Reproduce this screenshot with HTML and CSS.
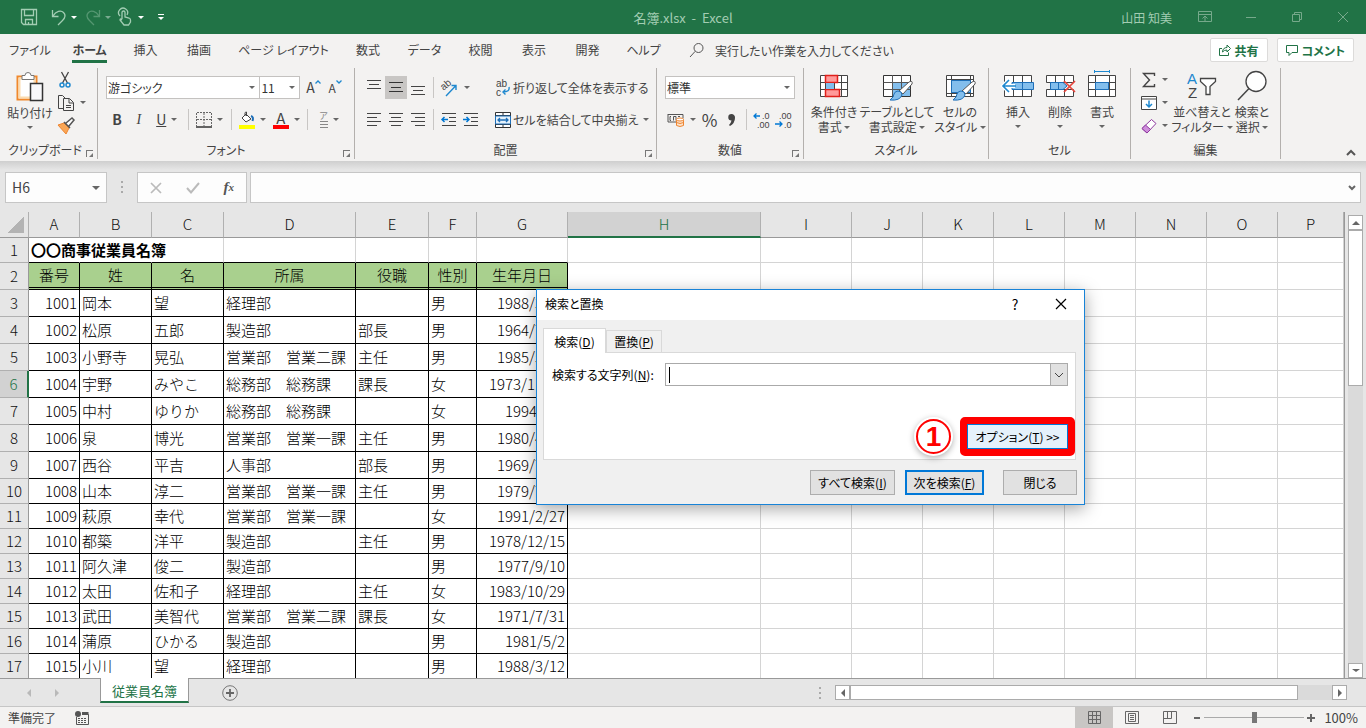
FILE: index.html
```html
<!DOCTYPE html>
<html lang="ja">
<head>
  <meta charset="UTF-8">
  <title>名簿.xlsx - Excel</title>
  <link rel="stylesheet" href="styles.css">
</head>
<body>
  <header class="titlebar">
    <div class="quick">
      <button aria-label="上書き保存"><svg width="18" height="18" viewBox="0 0 18 18"><path d="M1.500 1.500h15v15h-13l-2-2zM4.500 1.500v6h9v-6M5.500 16.500v-5h7v5M8.500 16v-2"/></svg></button>
      <button class="split" aria-label="元に戻す"><svg width="18" height="18" viewBox="0 0 18 18"><path d="M2.500 2v6.500h6M3 8c3-5 8-6 10.500-3.500 3 3 1 6-1 8L8 17"/></svg><i class="caret"></i></button>
      <button class="split dim" aria-label="やり直し"><svg width="18" height="18" viewBox="0 0 18 18"><path d="M15.500 2v6.500h-6M15 8c-3-5-8-6-10.500-3.500-3 3-1 6 1 8L10 17"/></svg><i class="caret"></i></button>
      <button class="split touch" aria-label="タッチ/マウス モード"><svg width="14" height="18" viewBox="2 0 14 18"><path d="M6 11V4.500a1.500 1.500 0 0 1 3 0V9l4 1q1.500.5 1.500 2v2l-2 3H8l-4-5q0-2 2 0M4 8a4.500 4.500 0 1 1 7-1"/></svg><i class="caret"></i></button>
      <button class="customize" aria-label="クイック アクセス ツール バーのユーザー設定"><i class="bar"></i><i class="caret"></i></button>
    </div>
    <div class="doc-title">名簿.xlsx&nbsp; -&nbsp; Excel</div>
    <div class="window-buttons">
      <span class="user">山田 知美</span>
      <button aria-label="リボンの表示オプション"><svg width="14" height="12" viewBox="0 0 14 12"><path d="M.5.5h13v10H.5zM.5 3.500h13M7 10V5M4.500 7.500L7 5l2.500 2.500"/></svg></button>
      <button aria-label="最小化"><svg width="12" height="12" viewBox="0 0 12 12"><path d="M1 6.500h10"/></svg></button>
      <button aria-label="元に戻す(縮小)"><svg width="12" height="12" viewBox="0 0 12 12"><path d="M1.500 3.500h7v7h-7zM3.500 3V1.500h7v7H9"/></svg></button>
      <button aria-label="閉じる"><svg width="12" height="12" viewBox="0 0 12 12"><path d="M1 1l10 10M11 1L1 11"/></svg></button>
    </div>
  </header>

  <nav class="tabs">
    <div class="tab-list">
      <a href="#">ファイル</a>
      <a href="#" class="active"><span>ホーム</span></a>
      <a href="#">挿入</a>
      <a href="#">描画</a>
      <a href="#">ページ レイアウト</a>
      <a href="#">数式</a>
      <a href="#">データ</a>
      <a href="#">校閲</a>
      <a href="#">表示</a>
      <a href="#">開発</a>
      <a href="#">ヘルプ</a>
    </div>
    <button class="tell-me"><svg width="16" height="16" viewBox="0 0 16 16"><circle cx="9.500" cy="6" r="4.500"/><path d="M6.200 9.300L1 15"/></svg>実行したい作業を入力してください</button>
    <div class="tab-actions">
      <button><svg width="12" height="12" viewBox="0 0 12 12"><path d="M3 4.500H.5v7h9v-3M3.500 8c0-3 2-4.500 4.500-4.500V1L11.500 4.500 8 8V6Q5 6 3.500 8z"/></svg>共有</button>
      <button><svg width="12" height="12" viewBox="0 0 12 12"><path d="M.5 1.500h11v7H6l-3 3v-3H.5z"/></svg>コメント</button>
    </div>
  </nav>

  <section class="ribbon">
    <div class="group clipboard">
      <div class="tools">
        <button class="big">
          <svg width="28" height="31" viewBox="0 0 28 31"><path d="M1.500 5.500h19v23h-19z" fill="#fff" stroke="#f0882c" stroke-width="2"/><path d="M3.500 7.500h15v19h-15z" stroke="#fbdcb0" stroke-width="2"/><path d="M6 8.500v-4h3q0-3 3-3t3 3h3v4z" fill="#fff" stroke="#777"/><path d="M14.500 12.500h12v17h-12z" fill="#f8f8fa" stroke="#333" stroke-width="1.500"/></svg>
          <span>貼り付け</span><i class="caret"></i>
        </button>
        <div class="stack">
          <button aria-label="切り取り"><svg width="16" height="18" viewBox="0 0 16 18"><path d="M4.500 1l6 11M11.500 1l-6 11" stroke="#444" stroke-width="1.300"/><circle cx="5" cy="14" r="2" stroke="#1e88cf" stroke-width="1.500"/><circle cx="11" cy="14" r="2" stroke="#1e88cf" stroke-width="1.500"/></svg></button>
          <button class="split" aria-label="コピー"><svg width="18" height="18" viewBox="0 0 18 18"><path d="M6 14.500H1.500v-13h4l3 3M6.500 4.500h6l4 4v8h-10zM12 5v4h4M9 11.500h5M9 13.500h5" stroke="#444"/></svg><i class="caret"></i></button>
          <button aria-label="書式のコピー/貼り付け"><svg width="18" height="18" viewBox="0 0 18 18"><path d="M1 8l6-2 5 5-3 6z" fill="#f9a656" stroke="#ee8531"/><path d="M7 5l6 6M9 6l6-5 2 2-5 6" fill="#fff" stroke="#555" stroke-width="1.500"/></svg></button>
        </div>
      </div>
      <div class="group-name">クリップボード</div><i class="launcher"></i>
    </div>

    <div class="group font">
      <div class="tools rows">
        <div class="row">
          <select class="font-name" aria-label="フォント"><option>游ゴシック</option></select>
          <select class="font-size" aria-label="フォント サイズ"><option>11</option></select>
          <button class="letter grow" aria-label="フォント サイズの拡大">A<svg width="6" height="4" viewBox="0 0 6 4"><path d="M.5 3.500L3 1l2.500 2.500" stroke="#1e88cf" stroke-width="1.300"/></svg></button>
          <button class="letter shrink" aria-label="フォント サイズの縮小">A<svg width="6" height="4" viewBox="0 0 6 4"><path d="M.5.5L3 3 5.500.5" stroke="#1e88cf" stroke-width="1.300"/></svg></button>
        </div>
        <div class="row">
          <button class="tool"><b>B</b></button>
          <button class="tool italic">I</button>
          <button class="split"><u>U</u><i class="caret"></i></button>
          <i class="sep"></i>
          <button class="split" aria-label="罫線"><svg width="16" height="16" viewBox="0 0 16 16"><path d="M1 .5h14M1 7.500h14M.5 1v13M8 1v13M15.500 1v13" stroke="#666" stroke-dasharray="2 1"/><path d="M0 15h16" stroke="#333" stroke-width="1.500"/></svg><i class="caret"></i></button>
          <i class="sep"></i>
          <button class="split" aria-label="塗りつぶしの色"><svg width="16" height="18" viewBox="0 0 16 18"><path d="M7 3l5 5-5 3-4-4zM6 5V2q0-1 1.500-1v4" fill="#fff" stroke="#444"/><path d="M12 5q3 1 1.500 5" stroke="#1e6fb8" stroke-width="2"/><path d="M0 14h16v4H0z" fill="#ff0"/></svg><i class="caret"></i></button>
          <button class="split font-color"><span>A</span><i class="caret"></i></button>
          <i class="sep"></i>
          <button class="split ruby"><span>ア<svg width="8" height="7" viewBox="0 0 8 7"><path d="M0 .5h8M0 3.500h8M0 6.500h8" stroke="#888"/></svg></span><i class="caret"></i></button>
        </div>
      </div>
      <div class="group-name">フォント</div><i class="launcher"></i>
    </div>

    <div class="group align">
      <div class="tools">
        <div class="rows">
          <div class="row">
            <button class="tool" aria-label="上揃え"><svg width="16" height="16" viewBox="0 0 16 16"><path d="M1 .5h14M3 4.500h10M1 8.500h14" stroke="#444"/></svg></button>
            <button class="tool on" aria-label="上下中央揃え"><svg width="16" height="16" viewBox="0 0 16 16"><path d="M1 2.500h14M3 7.500h10M1 11.500h14" stroke="#333"/></svg></button>
            <button class="tool" aria-label="下揃え"><svg width="16" height="16" viewBox="0 0 16 16"><path d="M1 6.500h14M3 10.500h10M1 14.500h14" stroke="#444"/></svg></button>
            <i class="sep"></i>
            <button class="split angle" aria-label="方向"><svg width="18" height="18" viewBox="0 0 18 18"><text x="0" y="9" transform="rotate(-40 5 7)">ab</text><path d="M5 17L15 6.500M10.500 6.500H15V11" stroke="#1e88cf" stroke-width="1.400"/></svg><i class="caret"></i></button>
          </div>
          <div class="row">
            <button class="tool" aria-label="左揃え"><svg width="16" height="14" viewBox="0 0 16 14"><path d="M1 .5h14M1 4.500h10M1 8.500h14M1 12.500h10" stroke="#444"/></svg></button>
            <button class="tool" aria-label="中央揃え"><svg width="16" height="14" viewBox="0 0 16 14"><path d="M1 .5h14M3 4.500h10M1 8.500h14M3 12.500h10" stroke="#444"/></svg></button>
            <button class="tool" aria-label="右揃え"><svg width="16" height="14" viewBox="0 0 16 14"><path d="M1 .5h14M5 4.500h10M1 8.500h14M5 12.500h10" stroke="#444"/></svg></button>
            <i class="sep"></i>
            <button class="tool" aria-label="インデントを減らす"><svg width="16" height="14" viewBox="0 0 16 14"><path d="M1 .5h14M8 4.500h7M8 8.500h7M1 12.500h14" stroke="#444"/><path d="M1 6.500h6M3.500 4L1 6.500 3.500 9" stroke="#0078d4" stroke-width="1.500"/></svg></button>
            <button class="tool" aria-label="インデントを増やす"><svg width="16" height="14" viewBox="0 0 16 14"><path d="M1 .5h14M8 4.500h7M8 8.500h7M1 12.500h14" stroke="#444"/><path d="M0 6.500h6M3.500 4L6 6.500 3.500 9" stroke="#0078d4" stroke-width="1.500"/></svg></button>
          </div>
        </div>
        <i class="tall-sep"></i>
        <div class="rows">
          <div class="row">
            <button class="wide"><svg width="16" height="18" viewBox="0 0 16 18"><text x="1" y="8">ab</text><text x="1" y="17">c</text><path d="M14 8q1 5-6 5M10.500 10.500L8 13l2.500 2.500" stroke="#1e88cf" stroke-width="1.400"/></svg>折り返して全体を表示する</button>
          </div>
          <div class="row">
            <button class="wide"><svg width="16" height="16" viewBox="0 0 16 16"><path d="M.5.5h15v15H.5zM8 1v3M8 12v3M1 3.500h14M1 12.500h14" stroke="#333" fill="#fff"/><path d="M.5 4h15v8H.5z" fill="#e6f2fb" stroke="#1e6fb8"/><path d="M3 8h10M5 6L3 8l2 2M11 6l2 2-2 2" stroke="#1e6fb8" stroke-width="1.300"/></svg>セルを結合して中央揃え<i class="caret"></i></button>
          </div>
        </div>
      </div>
      <div class="group-name">配置</div><i class="launcher"></i>
    </div>

    <div class="group number">
      <div class="tools rows">
        <div class="row"><select class="format" aria-label="数値の書式"><option>標準</option></select></div>
        <div class="row">
          <button class="split" aria-label="通貨表示形式"><svg width="18" height="16" viewBox="0 0 18 16"><path d="M1 2.500h15v4M1 2v8h8M4 4.500H3v4h1M6.500 8.500v-4H9v4M11 4.500h2" stroke="#555"/><path d="M9.500 7.500v6q3.500 2 7 0v-6" fill="#fde3cb" stroke="#ee8531"/><ellipse cx="13" cy="7.500" rx="3.500" ry="1.500" fill="#fff" stroke="#ee8531"/><path d="M9.500 10.500q3.500 2 7 0" stroke="#ee8531"/></svg><i class="caret"></i></button>
          <button class="tool percent">%</button>
          <button class="tool" aria-label="桁区切りスタイル"><svg width="9" height="14" viewBox="0 0 9 14"><path d="M4.500 1a3.500 3.500 0 0 1 3.500 4q0 5-5 8l-1-1q2-2 2.500-4.500a3.200 3.200 0 0 1 0-6.500z" fill="#444"/></svg></button>
          <i class="sep"></i>
          <button class="tool digits" aria-label="小数点以下の表示桁数を増やす"><svg width="18" height="16" viewBox="0 0 18 16"><text x="9" y="7">.0</text><text x="4" y="16">.00</text><path d="M1 4h6M3.500 1.500L1 4l2.500 2.500" stroke="#0078d4" stroke-width="1.300"/></svg></button>
          <button class="tool digits" aria-label="小数点以下の表示桁数を減らす"><svg width="18" height="16" viewBox="0 0 18 16"><text x="4" y="7">.00</text><text x="9" y="16">.0</text><path d="M0 12h7M4.500 9.500L7 12l-2.500 2.500" stroke="#0078d4" stroke-width="1.300"/></svg></button>
        </div>
      </div>
      <div class="group-name">数値</div><i class="launcher"></i>
    </div>

    <div class="group styles">
      <div class="tools">
        <button class="big">
          <svg width="30" height="30" viewBox="0 0 30 30"><path d="M1.500 4.500h27v21h-27zM1.500 11.500h27M1.500 18.500h27M22.500 4v21M15.500 4v21M6.500 4v21" fill="#fff" stroke="#444"/><path d="M6.500 4.500h12v7h-12zM6.500 18.500h14v7h-14z" fill="#ff9a9a" stroke="#e0201b" stroke-width="1.500"/><path d="M7 12h8v6H7z" fill="#83beec"/></svg>
          <span>条件付き<br>書式 <i class="caret"></i></span>
        </button>
        <button class="big as-table">
          <svg width="30" height="30" viewBox="0 0 30 30"><path d="M1.500 4.500h27v21h-27z" fill="#fff" stroke="#333"/><path d="M10 12h18v13H10z" fill="#83beec"/><path d="M1.500 11.500h27M1.500 18.500h27M10.500 4v21M19.500 4v21" stroke="#555"/><path d="M27 11q4-2 3 2l-9 10-4-3z" fill="#fff" stroke="#555"/><path d="M16 20q4 0 4 4-2 6-12 5 4-3 4-6 1-3 4-3z" fill="#83beec" stroke="#1e6fb8"/></svg>
          <span>テーブルとして<br>書式設定 <i class="caret"></i></span>
        </button>
        <button class="big">
          <svg width="30" height="30" viewBox="0 0 30 30"><path d="M1.500 4.500h27v21h-27zM1.500 8.500h27M1.500 22.500h27M6.500 4v21M25.500 4v21" fill="#fff" stroke="#444"/><path d="M6.500 9.500h19v12h-19z" fill="#83beec" stroke="#1e6fb8"/><path d="M27 11q4-2 3 2l-9 10-4-3z" fill="#fff" stroke="#555"/><path d="M16 20q4 0 4 4-2 6-12 5 4-3 4-6 1-3 4-3z" fill="#83beec" stroke="#1e6fb8"/></svg>
          <span>セルの<br>スタイル <i class="caret"></i></span>
        </button>
      </div>
      <div class="group-name">スタイル</div>
    </div>

    <div class="group cells">
      <div class="tools">
        <button class="big">
          <svg width="32" height="30" viewBox="0 0 32 30"><path d="M2.500 4.500h27v21h-27zM11.500 4v21M20.500 4v21" fill="#fff" stroke="#444"/><path d="M10 11.500h21.500v7H10zM20.500 12v6" fill="#83beec" stroke="#1e6fb8"/><path d="M7 9l-6 6 6 6M1 15h12" stroke="#fff" stroke-width="4"/><path d="M7 9l-6 6 6 6M1.500 15H14" stroke="#1e88cf" stroke-width="1.600"/></svg>
          <span>挿入</span><i class="caret"></i>
        </button>
        <button class="big">
          <svg width="32" height="30" viewBox="0 0 32 30"><path d="M2.500 4.500h27v7h-27zM2.500 18.500h27v7h-27zM11.500 4v7M20.500 4v7M11.500 18v7M20.500 18v7" fill="#fff" stroke="#444"/><path d="M6.500 11.500H19l4 3.500-4 3.500H6.500zM14.500 12v6" fill="#83beec" stroke="#1e6fb8"/><path d="M20 10l11 11M31 10L20 21" stroke="#e8453c" stroke-width="1.700"/></svg>
          <span>削除</span><i class="caret"></i>
        </button>
        <button class="big">
          <svg width="30" height="30" viewBox="0 0 30 30"><path d="M1.500 4.500h27v21h-27zM1.500 11.500h27M1.500 18.500h27M8.500 4v21M22.500 4v21" fill="#fff" stroke="#444"/><path d="M8.500 11.500h13v7h-13z" fill="#83beec" stroke="#1e6fb8"/><path d="M7.500.5h15M7.500-1v3M22.500-1v3" stroke="#1e88cf"/></svg>
          <span>書式</span><i class="caret"></i>
        </button>
      </div>
      <div class="group-name">セル</div>
    </div>

    <div class="group edit">
      <div class="tools">
        <div class="stack">
          <button class="split" aria-label="合計"><svg width="16" height="16" viewBox="0 0 16 16"><path d="M13.500 4V1.500H2.500L8.500 8l-6 6.500h11V12" stroke="#444" stroke-width="1.400"/></svg><i class="caret"></i></button>
          <button class="split" aria-label="フィル"><svg width="16" height="14" viewBox="0 0 16 14"><path d="M.5.5h15v13H.5zM.5 3h15" fill="#fff" stroke="#444"/><path d="M8 4.500V11M5 8l3 3 3-3" stroke="#1e88cf" stroke-width="1.500"/></svg><i class="caret"></i></button>
          <button class="split" aria-label="クリア"><svg width="16" height="16" viewBox="0 0 16 16"><path d="M10.500 1.500l4.500 4-9 9.500-5-4.500z" fill="#fff" stroke="#8f3aa0"/><path d="M4.500 7l5 4.500-3.500 3.500-5-4.500z" fill="#cf8fdc" stroke="#8f3aa0"/></svg><i class="caret"></i></button>
        </div>
        <button class="big">
          <svg class="sort" width="30" height="30" viewBox="0 0 30 30"><text class="a" x="0" y="13">A</text><text x="1" y="27">Z</text><path d="M13.500 7.500h15v3l-5.500 5v8h-4v-8l-5.500-5z" fill="#fff" stroke="#444" stroke-width="1.300"/></svg>
          <span>並べ替えと<br>フィルター <i class="caret"></i></span>
        </button>
        <button class="big">
          <svg width="30" height="30" viewBox="0 0 30 30"><circle cx="19" cy="10.500" r="10" fill="#fff" stroke="#444" stroke-width="1.300"/><path d="M12 17.500L1 29" stroke="#444" stroke-width="1.500"/></svg>
          <span>検索と<br>選択 <i class="caret"></i></span>
        </button>
      </div>
      <div class="group-name">編集</div>
    </div>
    <button class="collapse" aria-label="リボンを折りたたむ"><svg width="10" height="7" viewBox="0 0 10 7"><path d="M1 6l4-4 4 4" stroke="#555" stroke-width="2"/></svg></button>
  </section>

  <section class="formula-bar">
    <div class="name-box"><input type="text" value="H6" aria-label="名前ボックス"><i class="caret"></i></div>
    <i class="dots"></i>
    <div class="formula-buttons">
      <button aria-label="キャンセル"><svg width="12" height="12" viewBox="0 0 12 12"><path d="M1 1l10 10M11 1L1 11" stroke="#bbb" stroke-width="1.700"/></svg></button>
      <button aria-label="入力"><svg width="14" height="12" viewBox="0 0 14 12"><path d="M1 6l4 4.500L13 1" stroke="#bbb" stroke-width="2"/></svg></button>
      <button class="fx" aria-label="関数の挿入">f<small>x</small></button>
    </div>
    <div class="formula"><input type="text" aria-label="数式バー"><svg width="8" height="6" viewBox="0 0 8 6"><path d="M1 1l3 3 3-3" stroke="#666" stroke-width="2"/></svg></div>
  </section>

  <main class="sheet">
    <div class="grid-area">
      <table>
        <colgroup>
          <col class="w-head"><col class="w-a"><col class="w-b"><col class="w-b"><col class="w-d"><col class="w-e"><col class="w-f"><col class="w-g"><col class="w-h"><col class="w-g">
          <col class="w-j"><col class="w-j"><col class="w-j"><col class="w-j"><col class="w-j"><col class="w-j"><col>
        </colgroup>
        <thead><tr id="letters"><th class="corner"></th></tr></thead>
        <tbody id="cells"></tbody>
      </table>
    </div>
    <div class="vscroll">
      <button aria-label="上へスクロール"><i class="caret up"></i></button>
      <div class="track"><div class="thumb"></div></div>
      <button aria-label="下へスクロール"><i class="caret"></i></button>
    </div>
  </main>

  <footer class="sheet-tabs">
    <div class="sheet-nav"><i class="caret left"></i><i class="caret right"></i></div>
    <a href="#" class="sheet-tab">従業員名簿</a>
    <button class="add-sheet" aria-label="新しいシート"><svg width="16" height="16" viewBox="0 0 16 16"><circle cx="8" cy="8" r="7.300" stroke="#777"/><path d="M8 4v8M4 8h8" stroke="#666" stroke-width="1.800"/></svg></button>
    <i class="dots"></i>
    <div class="hscroll">
      <button aria-label="左へスクロール"><i class="caret left"></i></button>
      <div class="track"><div class="thumb"></div></div>
      <button aria-label="右へスクロール"><i class="caret right"></i></button>
    </div>
  </footer>

  <footer class="status">
    <span>準備完了</span>
    <svg class="macro" width="14" height="14" viewBox="0 0 14 14"><path d="M1.500 6v7.500h12v-10H7" stroke="#555"/><path d="M7 1h6.500v3H7z" fill="#555"/><circle cx="3" cy="3" r="3" fill="#555"/><path d="M3 7.500h9M3 9.500h9M3 11.500h9" stroke="#555" stroke-dasharray="2 1"/></svg>
    <div class="views">
      <button class="on" aria-label="標準"><svg width="13" height="13" viewBox="0 0 13 13"><path d="M.5.5h12v12H.5zM.5 4.500h12M.5 8.500h12M4.500.5v12M8.500.5v12"/></svg></button>
      <button aria-label="ページ レイアウト"><svg width="14" height="13" viewBox="0 0 14 13"><path d="M.5.5h13v12H.5zM3.500 2.500h7v8h-7zM5 4.500h4M5 6.500h4M5 8.500h4"/></svg></button>
      <button aria-label="改ページ プレビュー"><svg width="14" height="13" viewBox="0 0 14 13"><path d="M.5.5h13v12H.5zM4.500.5v7M8.500.5v7M.5 7.500h8"/></svg></button>
    </div>
    <div class="zoom">
      <button aria-label="縮小"><svg width="8" height="8" viewBox="0 0 8 8"><path d="M1 4h6" stroke-width="2"/></svg></button>
      <input type="range" min="0" max="100" value="50" aria-label="ズーム">
      <button aria-label="拡大"><svg width="8" height="8" viewBox="0 0 8 8"><path d="M0 4h8M4 0v8" stroke-width="2"/></svg></button>
      <span>100%</span>
    </div>
  </footer>

  <form class="dialog" role="dialog" aria-labelledby="dialogTitle">
    <div class="dialog-title">
      <span id="dialogTitle">検索と置換</span>
      <button type="button">?</button>
      <button type="button" aria-label="閉じる"><svg width="12" height="12" viewBox="0 0 12 12"><path d="M1 1l10 10M11 1L1 11" stroke="#000" stroke-width="1.200"/></svg></button>
    </div>
    <div class="dialog-tabs">
      <button type="button" class="active">検索(<u>D</u>)</button>
      <button type="button">置換(<u>P</u>)</button>
    </div>
    <div class="pane">
      <div class="field">
        <label for="findText">検索する文字列(<u>N</u>):</label>
        <div class="combo">
          <input type="text" id="findText">
          <button type="button" aria-label="履歴"><svg width="10" height="6" viewBox="0 0 10 6"><path d="M1 1l4 4 4-4" stroke="#444"/></svg></button>
        </div>
      </div>
      <div class="option-row">
        <span class="step">1</span>
        <button type="button" class="options">オプション(<u>T</u>) &gt;&gt;</button>
      </div>
    </div>
    <div class="dialog-buttons">
      <button type="button" class="find-all">すべて検索(<u>I</u>)</button>
      <button type="button" class="find-next">次を検索(<u>F</u>)</button>
      <button type="button" class="close">閉じる</button>
    </div>
  </form>

  <script>
    const letters = "ABCDEFGHIJKLMNOP".split("");
    const rows = [
      ["〇〇商事従業員名簿"],
      ["番号", "姓", "名", "所属", "役職", "性別", "生年月日"],
      ["1001", "岡本", "望", "経理部", "", "男", "1988/3/12"],
      ["1002", "松原", "五郎", "製造部", "部長", "男", "1964/7/21"],
      ["1003", "小野寺", "晃弘", "営業部　営業二課", "主任", "男", "1985/5/18"],
      ["1004", "宇野", "みやこ", "総務部　総務課", "課長", "女", "1973/11/24"],
      ["1005", "中村", "ゆりか", "総務部　総務課", "", "女", "1994/4/6"],
      ["1006", "泉", "博光", "営業部　営業一課", "主任", "男", "1980/4/15"],
      ["1007", "西谷", "平吉", "人事部", "部長", "男", "1969/7/13"],
      ["1008", "山本", "淳二", "営業部　営業一課", "主任", "男", "1979/7/30"],
      ["1009", "萩原", "幸代", "営業部　営業一課", "", "女", "1991/2/27"],
      ["1010", "都築", "洋平", "製造部", "主任", "男", "1978/12/15"],
      ["1011", "阿久津", "俊二", "製造部", "", "男", "1977/9/10"],
      ["1012", "太田", "佐和子", "経理部", "主任", "女", "1983/10/29"],
      ["1013", "武田", "美智代", "営業部　営業二課", "課長", "女", "1971/7/31"],
      ["1014", "蒲原", "ひかる", "製造部", "", "男", "1981/5/2"],
      ["1015", "小川", "望", "経理部", "", "男", "1988/3/12"]
    ];

    letters.forEach(letter => {
      const th = document.createElement("th");
      th.textContent = letter;
      if (letter === "H") th.className = "selected";
      document.getElementById("letters").appendChild(th);
    });

    rows.forEach((row, i) => {
      const n = i + 1;
      const tr = document.createElement("tr");
      tr.className = n === 1 ? "title-row" : n === 2 ? "head-row" : "data-row";
      if (n >= 3 && n <= 9) tr.classList.add("tall");
      if (n === 6) tr.classList.add("current");
      const th = document.createElement("th");
      th.textContent = n;
      tr.appendChild(th);
      letters.forEach((letter, c) => {
        const td = document.createElement("td");
        td.textContent = row[c] || "";
        tr.appendChild(td);
      });
      document.getElementById("cells").appendChild(tr);
    });
  </script>
</body>
</html>
```
FILE: styles.css
```css
* {
  box-sizing: border-box;
}

body {
  margin: 0;
  height: 100vh;
  display: flex;
  flex-direction: column;
  overflow: hidden;
  background: #e6e6e6;
  color: #444;
  font-family: "Noto Sans CJK JP", sans-serif;
  font-size: 12px;
  line-height: 15px;
  font-feature-settings: "palt";
}

button, input, select {
  font: inherit;
  font-feature-settings: inherit;
  color: inherit;
  border: none;
  background: none;
  padding: 0;
  margin: 0;
  border-radius: 0;
  outline: none;
}

button {
  display: flex;
  align-items: center;
  justify-content: center;
  white-space: nowrap;
}

a {
  color: inherit;
  text-decoration: none;
}

svg {
  display: block;
  flex: none;
  fill: none;
  overflow: visible;
}

svg text {
  font-family: "Liberation Sans", sans-serif;
  fill: #444;
}

.caret {
  display: inline-block;
  flex: none;
  border: 3px solid transparent;
  border-top-color: #666;
  border-bottom: 0;
}

.caret.up {
  border: 4px solid transparent;
  border-bottom-color: #666;
  border-top: 0;
}

.caret.left {
  border: 4px solid transparent;
  border-right-color: #666;
  border-left: 0;
}

.caret.right {
  border: 4px solid transparent;
  border-left-color: #666;
  border-right: 0;
}

/* title bar */
.titlebar {
  flex: none;
  height: 34px;
  display: grid;
  grid-template-columns: 1fr auto 1fr;
  align-items: center;
  background: #217346;
  color: #a3cdb3;
}

.doc-title {
  font-size: 13px;
}

.quick {
  display: flex;
  padding-left: 20px;
}

.quick svg {
  stroke: #a3cdb3;
  stroke-width: 1.3;
}

.quick .split {
  width: 34px;
  justify-content: flex-start;
  gap: 3px;
}

.quick .touch {
  width: 26px;
  gap: 6px;
}

.quick button:first-child {
  margin-right: 12px;
}

.quick .caret {
  border-top-color: #fff;
}

.quick .dim {
  opacity: 0.4;
}

.quick .customize {
  flex-direction: column;
  gap: 2px;
  margin-left: 14px;
}

.quick .bar {
  width: 6px;
  height: 1px;
  background: #fff;
}

.window-buttons {
  display: flex;
  justify-content: flex-end;
  align-items: center;
}

.window-buttons button {
  width: 46px;
  height: 34px;
}

.window-buttons svg {
  stroke: #76a98b;
}

.user {
  margin-right: 10px;
}

/* ribbon tabs */
.tabs {
  flex: none;
  height: 32px;
  display: flex;
  align-items: center;
  background: #f3f2f1;
}

.tab-list {
  display: grid;
  grid-template-columns: 60px 59px 53px 54px 115px 54px 59px 53px 54px 53px 59px;
  text-align: center;
  white-space: nowrap;
}

.tab-list a {
  height: 26px;
  line-height: 25px;
}

.tab-list .active {
  font-weight: bold;
}

.tab-list .active span {
  display: inline-block;
  height: 26px;
  border-bottom: 3px solid #217346;
}

.tell-me {
  margin-left: 16px;
  gap: 10px;
}

.tell-me svg {
  stroke: #555;
}

.tab-actions {
  display: flex;
  gap: 9px;
  margin-left: auto;
  margin-right: 12px;
  color: #217346;
  font-weight: bold;
}

.tab-actions button {
  height: 24px;
  padding: 0 8px;
  gap: 4px;
  background: #fff;
  border: 1px solid #dcdbda;
  border-radius: 2px;
}

.tab-actions svg {
  stroke: #217346;
}

/* ribbon */
.ribbon {
  flex: none;
  height: 95px;
  display: flex;
  background: #f3f2f1;
}

.group {
  flex: none;
  position: relative;
  display: flex;
  flex-direction: column;
  height: 91px;
  margin-top: 2px;
  padding: 0 8px;
  border-right: 1px solid #b3b0ad;
}

.clipboard { width: 98px; }
.font { width: 257px; }
.align { width: 302px; }
.number { width: 147px; }
.styles { width: 185px; padding: 0 2px; }
.cells { width: 142px; }
.edit { width: 150px; }

.tools {
  display: flex;
  height: 75px;
}

.group-name {
  text-align: center;
  line-height: 18px;
}

.clipboard .group-name {
  text-align: left;
}

/* dialog launcher in the corner of a group */
.launcher {
  position: absolute;
  right: 4px;
  bottom: 2px;
  width: 7px;
  height: 7px;
  border-top: 1px solid #777;
  border-left: 1px solid #777;
}

.launcher::after {
  content: "";
  position: absolute;
  right: 0;
  bottom: 0;
  border: 2px solid #777;
  border-top-color: transparent;
  border-left-color: transparent;
}

.rows {
  display: flex;
  flex-direction: column;
  gap: 9px;
  padding-top: 8px;
}

.row {
  display: flex;
  align-items: center;
  height: 23px;
}

.tool {
  width: 22px;
  height: 23px;
}

.tool.on {
  background: #c8c6c4;
}

.split {
  width: 34px;
  height: 23px;
  gap: 5px;
}

.sep {
  width: 1px;
  height: 21px;
  margin: 0 4px;
  background: #c8c6c4;
}

.tall-sep {
  width: 1px;
  height: 59px;
  margin: 6px 9px 0 4px;
  background: #c8c6c4;
}

.stack {
  display: flex;
  flex-direction: column;
  align-items: flex-start;
}

.stack button {
  height: 23px;
}

.big {
  flex: none;
  width: 56px;
  flex-direction: column;
  justify-content: flex-start;
  gap: 3px;
  padding-top: 3px;
}

.big .caret {
  margin: 3px 0;
}

.clipboard .big {
  width: 44px;
}

.clipboard .stack button {
  width: 30px;
  justify-content: flex-start;
  margin-left: 5px;
}

.styles .as-table {
  width: 70px;
}

.cells .big {
  width: 42px;
}

.edit .split {
  width: 30px;
  margin-right: 5px;
}

.edit .big:last-child {
  width: 44px;
}

select {
  appearance: none;
  height: 23px;
  padding: 0 4px 0 1px;
  border: 1px solid #c4c2c0;
  background: #fff url("data:image/svg+xml,%3Csvg xmlns='http://www.w3.org/2000/svg' width='6' height='3'%3E%3Cpath d='M0 0h6L3 3z' fill='%23666'/%3E%3C/svg%3E") no-repeat right 4px center;
  color: #333;
}

.font-name { width: 157px; }
.font-size { width: 40px; border-left: 0; }
.format { width: 131px; }

.letter {
  width: 22px;
  align-items: flex-start;
  font-size: 14px;
}

.letter.shrink {
  font-size: 12px;
}

.font .row .grow {
  margin-left: 3px;
}

.tool b, .italic, .split u {
  font-size: 14px;
}

.italic {
  font-family: "Liberation Serif", serif;
  font-style: italic;
}

.font-color span {
  width: 16px;
  height: 18px;
  border-bottom: 4px solid #f00;
  font-size: 15px;
  line-height: 13px;
}

.ruby span {
  display: flex;
  flex-direction: column;
  align-items: center;
  font-size: 9px;
  line-height: 10px;
  color: #888;
}

.angle text, .wide text {
  font-size: 10px;
}

.wide {
  gap: 2px;
}

.wide .caret {
  margin-left: 3px;
}

.percent {
  font-size: 17px;
}

.digits text {
  font-size: 9px;
}

.sort text {
  font-size: 15px;
}

.sort .a {
  fill: #1e88cf;
}

.collapse {
  align-self: flex-end;
  margin: 0 10px 5px auto;
}

/* formula bar */
.formula-bar {
  flex: none;
  height: 51px;
  display: flex;
  align-items: flex-start;
  padding: 11px 5px 0;
  background: linear-gradient(#cfcfcf, #e6e6e6 9px);
}

.name-box, .formula-buttons, .formula {
  display: flex;
  align-items: center;
  height: 31px;
  background: #fdfdfd;
  border: 1px solid #c6c6c6;
}

.name-box {
  width: 102px;
  padding: 0 6px;
  font-size: 14px;
}

.name-box input {
  flex: 1;
  min-width: 0;
}

.name-box .caret {
  border-width: 4px 4px 0;
}

.dots {
  width: 2px;
  height: 12px;
  background: repeating-linear-gradient(#aaa 0 2px, transparent 2px 5px);
}

.formula-bar .dots {
  margin: 9px 14px;
}

.formula-buttons {
  width: 110px;
  justify-content: space-around;
}

.fx {
  font-family: "Liberation Serif", serif;
  font-style: italic;
  font-weight: bold;
  font-size: 15px;
  color: #555;
}

.fx small {
  font-size: 11px;
}

.formula {
  flex: 1;
  margin-left: 3px;
  padding-right: 4px;
}

.formula input {
  flex: 1;
}

/* sheet */
.sheet {
  flex: 1;
  min-height: 0;
  display: flex;
  border-bottom: 1px solid #999;
}

.grid-area {
  flex: 1;
  min-width: 0;
  overflow: hidden;
  border-right: 1px solid #999;
}

table {
  width: 100%;
  table-layout: fixed;
  border-collapse: separate;
  border-spacing: 0;
  background: #fff;
  color: #000;
  font-size: 15px;
  font-weight: 300;
  font-feature-settings: normal;
}

.w-head { width: 29px; }
.w-a { width: 51px; }
.w-b { width: 72px; }
.w-d { width: 132px; }
.w-e { width: 73px; }
.w-f { width: 48px; }
.w-g { width: 91px; }
.w-h { width: 193px; }
.w-j { width: 71px; }

th, td {
  height: 25px;
  padding: 0 2px 1px;
  line-height: 20px;
  white-space: nowrap;
  border-right: 1px solid #d4d4d4;
  border-bottom: 1px solid #d4d4d4;
}

th {
  padding: 0 0 1px;
  background: #e6e6e6;
  border-color: #b0b0b0;
  color: #111;
  font-weight: 300;
}

thead th {
  height: 26px;
  border-bottom-color: #999;
}

tbody th {
  border-right-color: #999;
}

thead .selected {
  background: #d2d2d2;
  color: #217346;
  border-bottom: 2px solid #217346;
}

.current th {
  background: #d2d2d2;
  color: #217346;
  border-right: 2px solid #217346;
}

.corner {
  background: linear-gradient(135deg, transparent 50%, #b3b3b3 50%) no-repeat 8px 5px / 16px 16px #e6e6e6;
}

.title-row td:nth-child(2) {
  overflow: visible;
  font-weight: bold;
}

.title-row td:nth-child(-n+3) {
  border-right-color: transparent;
}

.title-row td:nth-child(-n+8),
.data-row td:nth-child(-n+8) {
  border-bottom-color: #000;
}

.head-row td:nth-child(-n+8),
.data-row td:nth-child(-n+8) {
  border-right-color: #000;
}

.head-row td {
  height: 27px;
}

.head-row td:nth-child(-n+8) {
  background: #a9d08e;
  text-align: center;
  border-bottom: 3px double #000;
}

.tall td {
  height: 27px;
}

.data-row td:nth-child(2),
.data-row td:nth-child(8) {
  text-align: right;
}

.vscroll {
  width: 21px;
  padding: 3px 3px 0;
  display: flex;
  flex-direction: column;
}

.vscroll button, .hscroll button {
  flex: none;
  width: 15px;
  height: 15px;
  background: #fff;
  border: 1px solid #ababab;
}

.vscroll button .caret {
  border-left-width: 4px;
  border-right-width: 4px;
}

.track {
  flex: 1;
  background: #dadada;
}

.thumb {
  background: #fff;
  border: 1px solid #ababab;
}

.vscroll .thumb {
  height: 36%;
}

/* sheet tabs */
.sheet-tabs {
  flex: none;
  height: 27px;
  display: flex;
  align-items: center;
}

.sheet-nav {
  width: 100px;
  display: flex;
  gap: 24px;
  padding-left: 27px;
  opacity: 0.35;
}

.sheet-tab {
  align-self: flex-start;
  height: 25px;
  margin-top: -1px;
  padding: 0 11px;
  background: #fff;
  border: 1px solid #999;
  border-top: 0;
  border-bottom: 2px solid #217346;
  color: #217346;
  font-size: 13px;
  line-height: 25px;
}

.add-sheet {
  margin-left: 33px;
}

.sheet-tabs .dots {
  margin-left: auto;
}

.hscroll {
  width: 512px;
  margin-left: 14px;
  margin-right: 19px;
  display: flex;
}

.hscroll .thumb {
  width: 93%;
  height: 15px;
}

/* status bar */
.status {
  flex: none;
  height: 22px;
  display: flex;
  align-items: center;
  padding: 0 8px;
  background: #f3f2f1;
  border-top: 1px solid #c6c6c6;
}

.macro {
  margin-left: 19px;
}

.views {
  display: flex;
  margin-left: auto;
}

.views button {
  width: 38px;
  height: 21px;
}

.views .on {
  background: #c8c6c4;
}

.views svg, .zoom svg {
  stroke: #666;
}

.zoom {
  display: flex;
  align-items: center;
  gap: 3px;
  margin-left: 4px;
  font-size: 13px;
}

.zoom span {
  margin-left: 6px;
}

.zoom input {
  appearance: none;
  width: 100px;
  height: 12px;
  background: linear-gradient(#aaa, #aaa) no-repeat center / 100% 1px;
}

.zoom input::-webkit-slider-thumb {
  appearance: none;
  width: 5px;
  height: 11px;
  background: #777;
}

/* find and replace window */
.dialog {
  position: absolute;
  left: 536px;
  top: 289px;
  width: 549px;
  background: #f0f0f0;
  border: 1px solid #1883d7;
  box-shadow: 0 4px 16px rgba(0,0,0,0.35);
  color: #000;
}

.dialog-title {
  display: flex;
  height: 30px;
  padding-left: 8px;
  background: #fff;
}

.dialog-title span {
  flex: 1;
  line-height: 28px;
}

.dialog-title button {
  width: 46px;
  height: 28px;
  font-size: 14px;
}

.dialog-tabs {
  display: flex;
  align-items: flex-end;
  padding: 8px 6px 0;
}

.dialog-tabs button {
  width: 56px;
  height: 22px;
  border: 1px solid #d9d9d9;
  border-bottom: 0;
}

.dialog-tabs .active {
  width: 63px;
  height: 25px;
  margin-bottom: -1px;
  background: #fff;
  z-index: 1;
}

.pane {
  height: 108px;
  margin: 0 8px 0 6px;
  padding: 10px 7px 0 8px;
  background: #fff;
  border: 1px solid #d9d9d9;
}

.field {
  display: flex;
  align-items: center;
}

.field label {
  width: 113px;
  white-space: nowrap;
}

.combo {
  flex: 1;
  display: flex;
  height: 23px;
  border: 1px solid #aaa;
}

/* text cursor waiting at the start of the box */
.combo input {
  flex: 1;
  padding: 0 3px;
  background: linear-gradient(#000, #000) no-repeat 3px center / 1px 16px;
}

.combo button {
  width: 17px;
  background: #e1e1e1;
  border-left: 1px solid #aaa;
}

.option-row {
  display: flex;
  justify-content: flex-end;
  align-items: center;
  gap: 9px;
  margin: 31px -7px 0 0;
}

.step {
  display: flex;
  align-items: center;
  justify-content: center;
  width: 35px;
  height: 35px;
  border: 2px solid #f00;
  border-radius: 50%;
  box-shadow: 0 0 0 2px #fff, 0 2px 6px 2px rgba(0,0,0,0.3);
  color: #f00;
  font-family: "Liberation Sans", sans-serif;
  font-size: 28px;
  font-weight: bold;
}

.options {
  width: 115px;
  height: 39px;
  background: #e5f1fb;
  border: 7px solid #f00;
  border-radius: 5px;
  box-shadow: inset 0 0 0 1px #0078d7;
}

.dialog-buttons {
  display: flex;
  justify-content: flex-end;
  padding: 10px 7px 9px;
}

.dialog-buttons button {
  height: 25px;
  background: #e1e1e1;
  border: 1px solid #adadad;
}

.dialog-buttons .find-all {
  width: 85px;
}

.dialog-buttons .find-next {
  width: 79px;
  margin: 0 19px 0 10px;
  border: 2px solid #0078d7;
}

.dialog-buttons .close {
  width: 74px;
}
```
